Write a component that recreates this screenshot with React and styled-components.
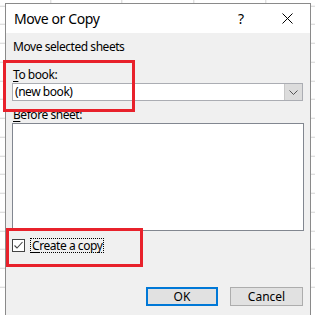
import React from "react";
import styled, { createGlobalStyle } from "styled-components";

const Global = createGlobalStyle`
  html, body {
    margin: 0;
    padding: 0;
  }
  body {
    width: 315px;
    height: 315px;
    overflow: hidden;
    background-color: #ffffff;
    background-image:
      repeating-linear-gradient(to right, transparent 0 70.7px, #d4d4d4 70.7px 71.7px),
      repeating-linear-gradient(to bottom, transparent 0 17.75px, #d4d4d4 17.75px 18.75px);
    background-position: -20.7px 0, 0 -12.25px;
    font-family: "Noto Sans", "Open Sans", sans-serif;
  }
`;

const Dialog = styled.div`
  position: relative;
  margin: 3px 0 0 5px;
  width: 306px;
  height: 320px;
  box-sizing: border-box;
  border: 1px solid #8a8a8a;
  border-bottom: none;
  background: #f0f0f0;
  display: flex;
  flex-direction: column;
`;

const TitleBar = styled.div`
  height: 29px;
  background: #ffffff;
  display: flex;
  align-items: center;
  padding-left: 8px;
  font-size: 14px;
  color: #000;
`;

const Title = styled.div`
  flex: 1;
  letter-spacing: -0.4px;
`;

const TitleButton = styled.div`
  width: 46px;
  display: flex;
  justify-content: center;
  align-items: center;
  font-size: 14px;
`;

const Body = styled.div`
  padding: 0 6px;
  font-size: 12px;
  color: #000;
  display: flex;
  flex-direction: column;
`;

const Text = styled.div`
  margin-top: ${p => p.$top || 0}px;
  height: 16px;
  line-height: 16px;
  padding-left: 1px;
  letter-spacing: -0.45px;
`;

const Key = styled.span`
  text-decoration: underline;
  text-underline-offset: 2px;
`;

const Combo = styled.div`
  width: 289px;
  height: 16px;
  border: 1px solid #abadb3;
  background: #fff;
  display: flex;
  align-items: stretch;
`;

const ComboValue = styled.div`
  flex: 1;
  padding-left: 2px;
  line-height: 16px;
  letter-spacing: -0.45px;
`;

const ComboButton = styled.div`
  width: 17px;
  background: #dcdcdc;
  border-left: 1px solid #c8c8c8;
  display: flex;
  align-items: center;
  justify-content: center;
`;

const ListBox = styled.div`
  width: 290px;
  height: 106px;
  border: 1px solid #828790;
  background: #fff;
`;

const CheckRow = styled.div`
  margin-top: 7px;
  display: flex;
  align-items: center;
  gap: 5px;
  height: 15px;
`;

const CheckBox = styled.div`
  width: 11px;
  height: 11px;
  border: 1px solid #444;
  background: #fff;
  display: flex;
  align-items: center;
  justify-content: center;
`;

const FocusLabel = styled.div`
  border: 1px dotted #000;
  padding: 0 1px;
  line-height: 13px;
  letter-spacing: -0.45px;
`;

const Buttons = styled.div`
  margin-top: 34px;
  display: flex;
  justify-content: flex-end;
  gap: 12px;
  padding-right: 1px;
`;

const Button = styled.div`
  width: ${p => (p.$primary ? 68 : 71)}px;
  height: ${p => (p.$primary ? 15 : 17)}px;
  border: ${p => (p.$primary ? "2px solid #0078d7" : "1px solid #adadad")};
  background: #e1e1e1;
  display: flex;
  align-items: center;
  justify-content: center;
  font-size: 12px;
`;

const Highlight = styled.div`
  position: absolute;
  border: 3px solid #e8212b;
  pointer-events: none;
`;

const Chevron = () => (
  <svg width="9" height="5" viewBox="0 0 9 5">
    <path d="M0.5 0.5 L4.5 4.5 L8.5 0.5" fill="none" stroke="#555" strokeWidth="1" />
  </svg>
);

const Check = () => (
  <svg width="11" height="11" viewBox="0 0 11 11">
    <path d="M1.5 5.5 L4 8 L9.5 2" fill="none" stroke="#444" strokeWidth="1.1" />
  </svg>
);

const Close = () => (
  <svg width="11" height="11" viewBox="0 0 11 11">
    <path d="M0.5 0.5 L10.5 10.5 M10.5 0.5 L0.5 10.5" stroke="#000" strokeWidth="1" />
  </svg>
);

export default function App() {
  return (
    <>
      <Global />
      <Dialog>
        <TitleBar>
          <Title>Move or Copy</Title>
          <TitleButton>?</TitleButton>
          <TitleButton><Close /></TitleButton>
        </TitleBar>
        <Body>
          <Text $top={6}>Move selected sheets</Text>
          <Text $top={12}><Key>T</Key>o book:</Text>
          <Combo>
            <ComboValue>(new book)</ComboValue>
            <ComboButton><Chevron /></ComboButton>
          </Combo>
          <Text $top={6}><Key>B</Key>efore sheet:</Text>
          <ListBox />
          <CheckRow>
            <CheckBox><Check /></CheckBox>
            <FocusLabel><Key>C</Key>reate a copy</FocusLabel>
          </CheckRow>
          <Buttons>
            <Button $primary>OK</Button>
            <Button>Cancel</Button>
          </Buttons>
        </Body>
        <Highlight style={{ left: -3, top: 56, width: 126, height: 46 }} />
        <Highlight style={{ left: 0, top: 224, width: 131, height: 33 }} />
      </Dialog>
    </>
  );
}
